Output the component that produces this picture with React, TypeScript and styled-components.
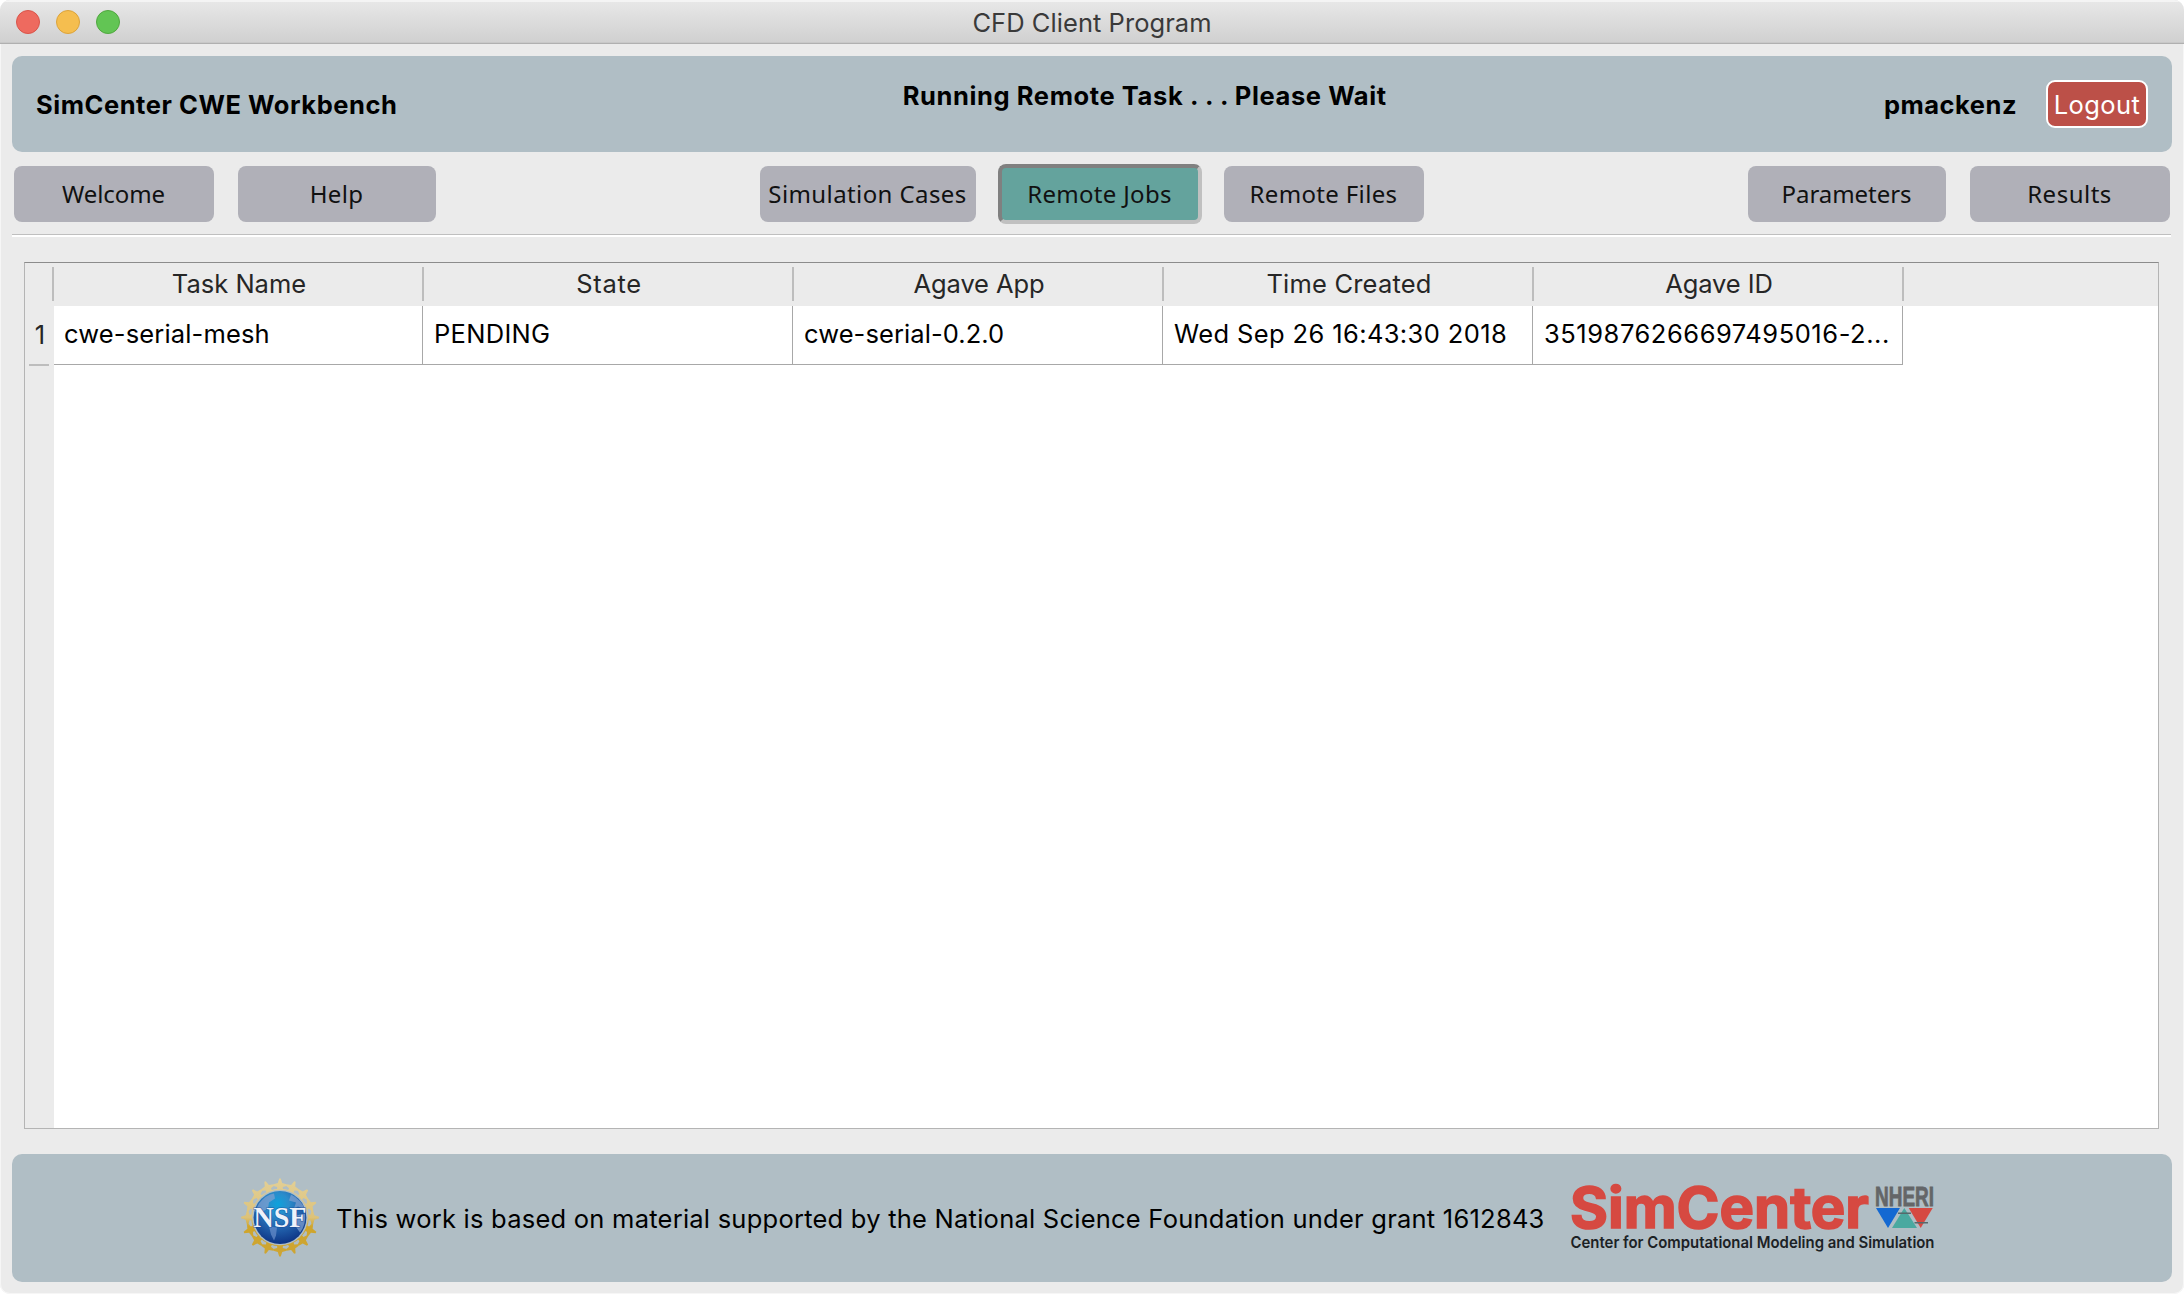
import React from "react";
import styled, { createGlobalStyle, css } from "styled-components";

const GlobalStyle = createGlobalStyle`
  *, *::before, *::after { box-sizing: border-box; }
  html, body { margin: 0; padding: 0; background: #fff; }
`;

const Window = styled.div`
  width: 2184px;
  height: 1294px;
  overflow: hidden;
  display: flex;
  flex-direction: column;
  border-radius: 10px;
  background: #ebebeb;
  box-shadow: inset 1px 0 0 #f6f6f6, inset -1px 0 0 #f6f6f6, inset 0 -1px 0 #f6f6f6;
  font-family: Inter, "Liberation Sans", sans-serif;
  font-size: 25.5px;
  color: #000;
`;

const TitleBar = styled.header`
  height: 44px;
  flex: none;
  display: grid;
  grid-template-columns: 1fr auto 1fr;
  align-items: center;
  padding: 1px 16px 0;
  background: linear-gradient(#e8e8e8, #d0d0d0);
  border-bottom: 1px solid #b0b0b0;
  box-shadow: inset 0 2px 0 #f4f4f4, inset 0 -1px 0 #c8c8c8;
`;

const Lights = styled.div`
  display: flex;
  gap: 16px;
`;

const Light = styled.span<{ $fill: string; $ring: string }>`
  width: 24px;
  height: 24px;
  border-radius: 50%;
  background: ${(p) => p.$fill};
  border: 1px solid ${(p) => p.$ring};
`;

const Text = styled.span<{ $track?: number }>`
  white-space: pre;
  letter-spacing: ${(p) => p.$track ?? 0}px;
`;

const WindowTitle = styled(Text)`
  color: #3a3a3a;
`;

const Panel = styled.section`
  flex: none;
  margin: 0 12px;
  border-radius: 10px;
  background: #b0bec5;
`;

const Banner = styled(Panel)`
  height: 96px;
  margin-top: 12px;
  padding: 0 24px;
  display: flex;
  justify-content: space-between;
  align-items: center;
`;

const Heading = styled(Text)`
  font-weight: 700;
`;

const Status = styled(Heading)`
  padding-bottom: 17px;
  padding-left: 8px;
`;

const Account = styled.div`
  display: flex;
  align-items: center;
  gap: 29px;
`;

const LogoutButton = styled.button`
  width: 102px;
  height: 48px;
  padding: 0;
  border: 2px solid #fff;
  border-radius: 9px;
  background: #bc5048;
  color: #fff;
  font: inherit;
  letter-spacing: 0.4px;
`;

const Toolbar = styled.nav`
  height: 60px;
  flex: none;
  margin: 12px 14px 0;
  display: flex;
  justify-content: space-between;
  align-items: center;
`;

const ButtonGroup = styled.div<{ $gap: number }>`
  display: flex;
  align-items: center;
  gap: ${(p) => p.$gap}px;
`;

const NavButton = styled.button<{ $width: number; $track: number; $active?: boolean }>`
  width: ${(p) => p.$width}px;
  height: 56px;
  padding: 0 1px 1px 0;
  border: 0;
  border-radius: 8px;
  background: #b0b0b8;
  color: #111;
  font: 400 24px "Noto Sans", "Open Sans", sans-serif;
  letter-spacing: ${(p) => p.$track}px;
  white-space: nowrap;
  ${(p) =>
    p.$active &&
    css`
      height: 60px;
      border: 4px solid;
      border-color: #808080 #c0c0c0 #c0c0c0 #808080;
      background: #64a39d;
    `}
`;

const Divider = styled.hr`
  width: 2159px;
  height: 3px;
  flex: none;
  margin: 10px 0 0 12px;
  border: 0;
  border-top: 1px solid #bfbfbf;
  background: #fff;
`;

const Table = styled.main`
  width: 2135px;
  height: 867px;
  flex: none;
  margin: 25px 0 0 24px;
  display: grid;
  grid-template-columns: 29px 1fr;
  grid-template-rows: 43px 1fr;
  border: 1px solid #b4b4b4;
  border-top-color: #8c8c8c;
  background: #fff;
`;

const Corner = styled.div`
  display: flex;
  justify-content: flex-end;
  padding: 4px 0 5px;
  background: #ebebeb;
`;

const Tick = styled.i`
  width: 2px;
  background: #bdbdbd;
`;

const ColumnHeads = styled.div`
  display: flex;
  padding: 4px 0 5px;
  background: #ebebeb;
`;

const ColumnHead = styled.div`
  width: 370px;
  padding: 0 0 2px 2px;
  display: flex;
  align-items: center;
  justify-content: center;
  border-right: 2px solid #bdbdbd;
  color: #262626;
`;

const RowHeads = styled.div`
  background: #ebebeb;
`;

const RowHead = styled.div`
  height: 60px;
  margin: 0 5px 0 4px;
  padding: 1px 0 3px 2px;
  display: flex;
  align-items: center;
  justify-content: center;
  border-bottom: 2px solid #bdbdbd;
  color: #262626;
`;

const Row = styled.div`
  height: 59px;
  display: flex;
`;

const Cell = styled.div<{ $first?: boolean }>`
  width: ${(p) => (p.$first ? 369 : 370)}px;
  padding: 0 0 4px ${(p) => (p.$first ? 10 : 11)}px;
  display: flex;
  align-items: center;
  overflow: hidden;
  border-right: 1px solid #a8a8a8;
  border-bottom: 1px solid #a8a8a8;
`;

const Footer = styled(Panel)`
  height: 128px;
  margin-top: 25px;
  padding-left: 228px;
  display: flex;
  align-items: center;
`;

const Credit = styled(Text)`
  margin: 0 21px 0 16px;
`;

const columns = [
  { head: "Task Name", headTrack: 0, value: "cwe-serial-mesh", track: 0.15 },
  { head: "State", headTrack: 0.7, value: "PENDING", track: 0.3 },
  { head: "Agave App", headTrack: -0.1, value: "cwe-serial-0.2.0", track: 0.08 },
  { head: "Time Created", headTrack: 0.2, value: "Wed Sep 26 16:43:30 2018", track: 0.38 },
  { head: "Agave ID", headTrack: -0.1, value: "3519876266697495016-2...", track: 0.54 },
];

const rays = Array.from({ length: 16 }, (_, i) => i * 22.5);

function NsfSeal() {
  return (
    <svg width="80" height="80" viewBox="-40 -39.5 80 80">
      <defs>
        <linearGradient id="gold" gradientUnits="userSpaceOnUse" x1="0" y1="-38" x2="0" y2="38">
          <stop offset="0" stopColor="#e3cf95" />
          <stop offset="0.5" stopColor="#dcc27a" />
          <stop offset="0.62" stopColor="#cfa52c" />
          <stop offset="1" stopColor="#cda534" />
        </linearGradient>
        <radialGradient id="globe" cx="0.46" cy="0.25" r="0.75">
          <stop offset="0" stopColor="#0da2dc" />
          <stop offset="0.28" stopColor="#2b8ccb" />
          <stop offset="0.6" stopColor="#2263ae" />
          <stop offset="1" stopColor="#0e3484" />
        </radialGradient>
        <mask id="rayMask">
          <g fill="#fff">
            <circle r="28.8" />
            {rays.map((a) => (
              <path
                key={a}
                transform={`rotate(${a})`}
                d="M-0.8 -39 H0.8 L2.2 -34.4 L6.6 -33.2 L6.6 -31.6 L2.8 -30.4 L3 -26 L-3 -26 L-2.8 -30.4 L-6.6 -31.6 L-6.6 -33.2 L-2.2 -34.4 Z"
              />
            ))}
          </g>
        </mask>
      </defs>
      <rect x="-40" y="-40" width="80" height="80" fill="url(#gold)" mask="url(#rayMask)" />
      <circle r="27.8" fill="#b0bec5" />
      <circle r="26.4" fill="url(#globe)" />
      <path
        d="M-21 -14 Q-14 -23 -6 -24 L-5 -19 L-11 -15 L-12 -9 L-19 -5 L-25 -6 Z M11 -23 Q21 -18 25 -8 L18 -11 L14 -9 L16 -15 L9 -17 Z M16 -2 L25 -4 Q26 8 20 15 L15 8 Z"
        fill="#7d9fcf"
        opacity="0.75"
      />
      <path d="M-11 9 L-3 10 L-4 18 L-6 23 L-9 17 Z" fill="#6a8fcb" opacity="0.7" />
      <text
        x="-26.5"
        y="9.4"
        textLength="53"
        lengthAdjust="spacingAndGlyphs"
        fontFamily="'Liberation Serif', serif"
        fontWeight="700"
        fontSize="28.5"
        fill="#eef2fa"
        stroke="#16408e"
        strokeOpacity="0.45"
        strokeWidth="1.6"
        paintOrder="stroke"
      >
        NSF
      </text>
    </svg>
  );
}

function SimCenterLogo() {
  return (
    <svg width="372" height="112" viewBox="1566 1162 372 112">
      <text
        x="1570"
        y="1228"
        textLength="299"
        lengthAdjust="spacingAndGlyphs"
        fontFamily="Inter, sans-serif"
        fontWeight="700"
        fontSize="57"
        fill="#d64941"
        stroke="#d64941"
        strokeWidth="1.6"
      >
        SimCenter
      </text>
      <text
        x="1875"
        y="1206"
        textLength="59"
        lengthAdjust="spacingAndGlyphs"
        fontFamily="'Liberation Sans', sans-serif"
        fontWeight="700"
        fontSize="27.5"
        fill="#646668"
        stroke="#646668"
        strokeWidth="0.8"
      >
        NHERI
      </text>
      <path d="M1876 1208 H1900 L1888 1228 Z" fill="#1469d2" />
      <path d="M1904.3 1208 L1917 1228 H1892 Z" fill="#4aa9a0" />
      <path d="M1908.7 1208 H1932.7 L1920.7 1228 Z" fill="#d64941" />
      <path d="M1898 1213.2 H1911 M1914.5 1222.8 H1928" stroke="#56696b" strokeWidth="1.6" />
      <text
        x="1570.5"
        y="1247.5"
        textLength="364"
        lengthAdjust="spacingAndGlyphs"
        fontFamily="Inter, sans-serif"
        fontWeight="600"
        fontSize="16"
        fill="#1c2225"
      >
        Center for Computational Modeling and Simulation
      </text>
    </svg>
  );
}

export default function App() {
  return (
    <>
      <GlobalStyle />
      <Window>
        <TitleBar>
          <Lights>
            <Light $fill="#ee6a5f" $ring="#d9544a" />
            <Light $fill="#f5be4f" $ring="#dba33b" />
            <Light $fill="#62c554" $ring="#50a73f" />
          </Lights>
          <WindowTitle $track={0.05}>CFD Client Program</WindowTitle>
        </TitleBar>

        <Banner>
          <Heading $track={0.55}>SimCenter CWE Workbench</Heading>
          <Status $track={0.6}>Running Remote Task . . . Please Wait</Status>
          <Account>
            <Heading $track={0.5}>pmackenz</Heading>
            <LogoutButton>Logout</LogoutButton>
          </Account>
        </Banner>

        <Toolbar>
          <ButtonGroup $gap={24}>
            <NavButton $width={200} $track={-0.1}>Welcome</NavButton>
            <NavButton $width={198} $track={0.33}>Help</NavButton>
          </ButtonGroup>
          <ButtonGroup $gap={22}>
            <NavButton $width={216} $track={0.4}>Simulation Cases</NavButton>
            <NavButton $width={204} $track={0.3} $active>Remote Jobs</NavButton>
            <NavButton $width={200} $track={0.34}>Remote Files</NavButton>
          </ButtonGroup>
          <ButtonGroup $gap={24}>
            <NavButton $width={198} $track={-0.05}>Parameters</NavButton>
            <NavButton $width={200} $track={0.5}>Results</NavButton>
          </ButtonGroup>
        </Toolbar>

        <Divider />

        <Table>
          <Corner>
            <Tick />
          </Corner>
          <ColumnHeads>
            {columns.map((c) => (
              <ColumnHead key={c.head}>
                <Text $track={c.headTrack}>{c.head}</Text>
              </ColumnHead>
            ))}
          </ColumnHeads>
          <RowHeads>
            <RowHead>1</RowHead>
          </RowHeads>
          <Row>
            {columns.map((c, i) => (
              <Cell key={c.head} $first={i === 0}>
                <Text $track={c.track}>{c.value}</Text>
              </Cell>
            ))}
          </Row>
        </Table>

        <Footer>
          <NsfSeal />
          <Credit $track={0.238}>
            This work is based on material supported by the National Science Foundation under grant 1612843
          </Credit>
          <SimCenterLogo />
        </Footer>
      </Window>
    </>
  );
}
